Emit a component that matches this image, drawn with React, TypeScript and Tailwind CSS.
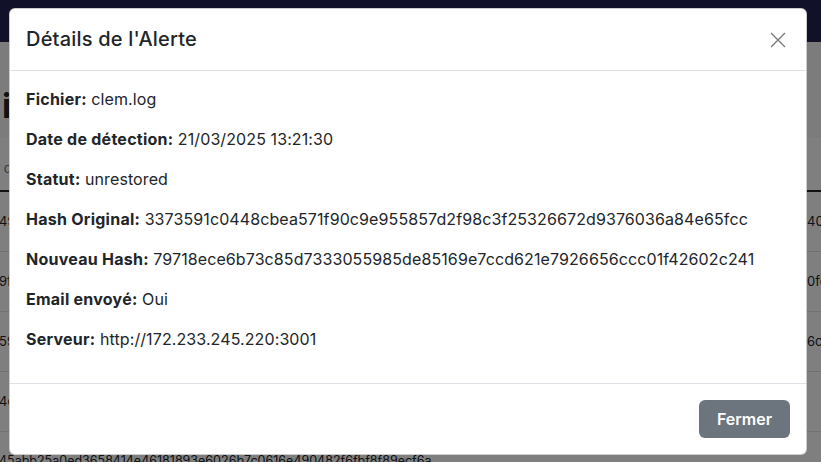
import React from "react";

const font = { fontFamily: "Inter, 'Noto Sans', sans-serif" };

const rowsLeft = ["49d1c0a3", "9f2b7e41", "59c3ab10", "4e8d2f07"];
const rowsRight = ["401ae9", "0fc3d2", "6c71b8", ""];

function Field({ label, value }: { label: string; value: string }) {
  return (
    <p className="mb-4 text-[16px] leading-6 text-[#212529]">
      <span className="font-bold tracking-[0.25px]">{label}</span>{" "}
      <span className="tracking-[0.1px]">{value}</span>
    </p>
  );
}

export default function App() {
  return (
    <div className="relative h-[462px] w-[821px] overflow-hidden bg-white" style={font}>
      {/* background page */}
      <div className="flex h-full flex-col">
        <div className="h-[42px] shrink-0 bg-[#222452]" />
        <div className="flex h-[95px] shrink-0 items-end bg-[#f8f9fa] pb-[14px]">
          <div className="ml-[2px] text-[34px] font-bold leading-none text-[#212529]">i</div>
        </div>
        <div className="flex h-[53px] shrink-0 items-end pb-[12px]">
          <span className="-ml-[3px] text-[13px] text-[#6c757d]">l c</span>
        </div>
        <div className="h-[2px] shrink-0 bg-[#212529]" />
        {rowsLeft.map((l, i) => (
          <div key={i} className="flex h-[60px] shrink-0 items-center justify-between border-b border-[#dee2e6] text-[13px] text-[#212529]">
            <span className="-ml-[1px]">{l}</span>
            <span className="w-[14px] overflow-hidden whitespace-nowrap">{rowsRight[i]}</span>
          </div>
        ))}
        <div className="flex h-[58px] shrink-0 items-center text-[12.5px] text-[#212529]">
          <span className="-ml-[1px]">45abb25a0ed3658414e46181893e6026b7c0616e490482f6fbf8f89ecf6a</span>
        </div>
      </div>

      {/* backdrop */}
      <div className="absolute inset-0 bg-black/50" />

      {/* modal */}
      <div className="absolute inset-0">
        <div className="ml-[9px] mt-[8px] w-[798px] rounded-[6px] border border-black/20 bg-white">
          <div className="flex items-center justify-between border-b border-[#dee2e6] px-4 py-4">
            <h5 className="text-[20px] font-medium leading-[29px] tracking-[0.2px] text-[#212529]">Détails de l'Alerte</h5>
            <button className="flex h-[24px] w-[24px] items-center justify-center">
              <svg width="16" height="16" viewBox="0 0 16 16" fill="none" stroke="#7a7a7a" strokeWidth="1.4">
                <path d="M1 1 L15 15 M15 1 L1 15" />
              </svg>
            </button>
          </div>
          <div className="p-4">
            <Field label="Fichier:" value="clem.log" />
            <Field label="Date de détection:" value="21/03/2025 13:21:30" />
            <Field label="Statut:" value="unrestored" />
            <Field label="Hash Original:" value="3373591c0448cbea571f90c9e955857d2f98c3f25326672d9376036a84e65fcc" />
            <Field label="Nouveau Hash:" value="79718ece6b73c85d7333055985de85169e7ccd621e7926656ccc01f42602c241" />
            <Field label="Email envoyé:" value="Oui" />
            <Field label="Serveur:" value="http://172.233.245.220:3001" />
          </div>
          <div className="flex justify-end border-t border-[#dee2e6] px-3 py-3">
            <button className="m-1 flex h-[38px] w-[91px] items-center justify-center rounded-[6px] bg-[#6c757d] text-[16px] font-semibold text-white">
              Fermer
            </button>
          </div>
        </div>
      </div>
    </div>
  );
}
